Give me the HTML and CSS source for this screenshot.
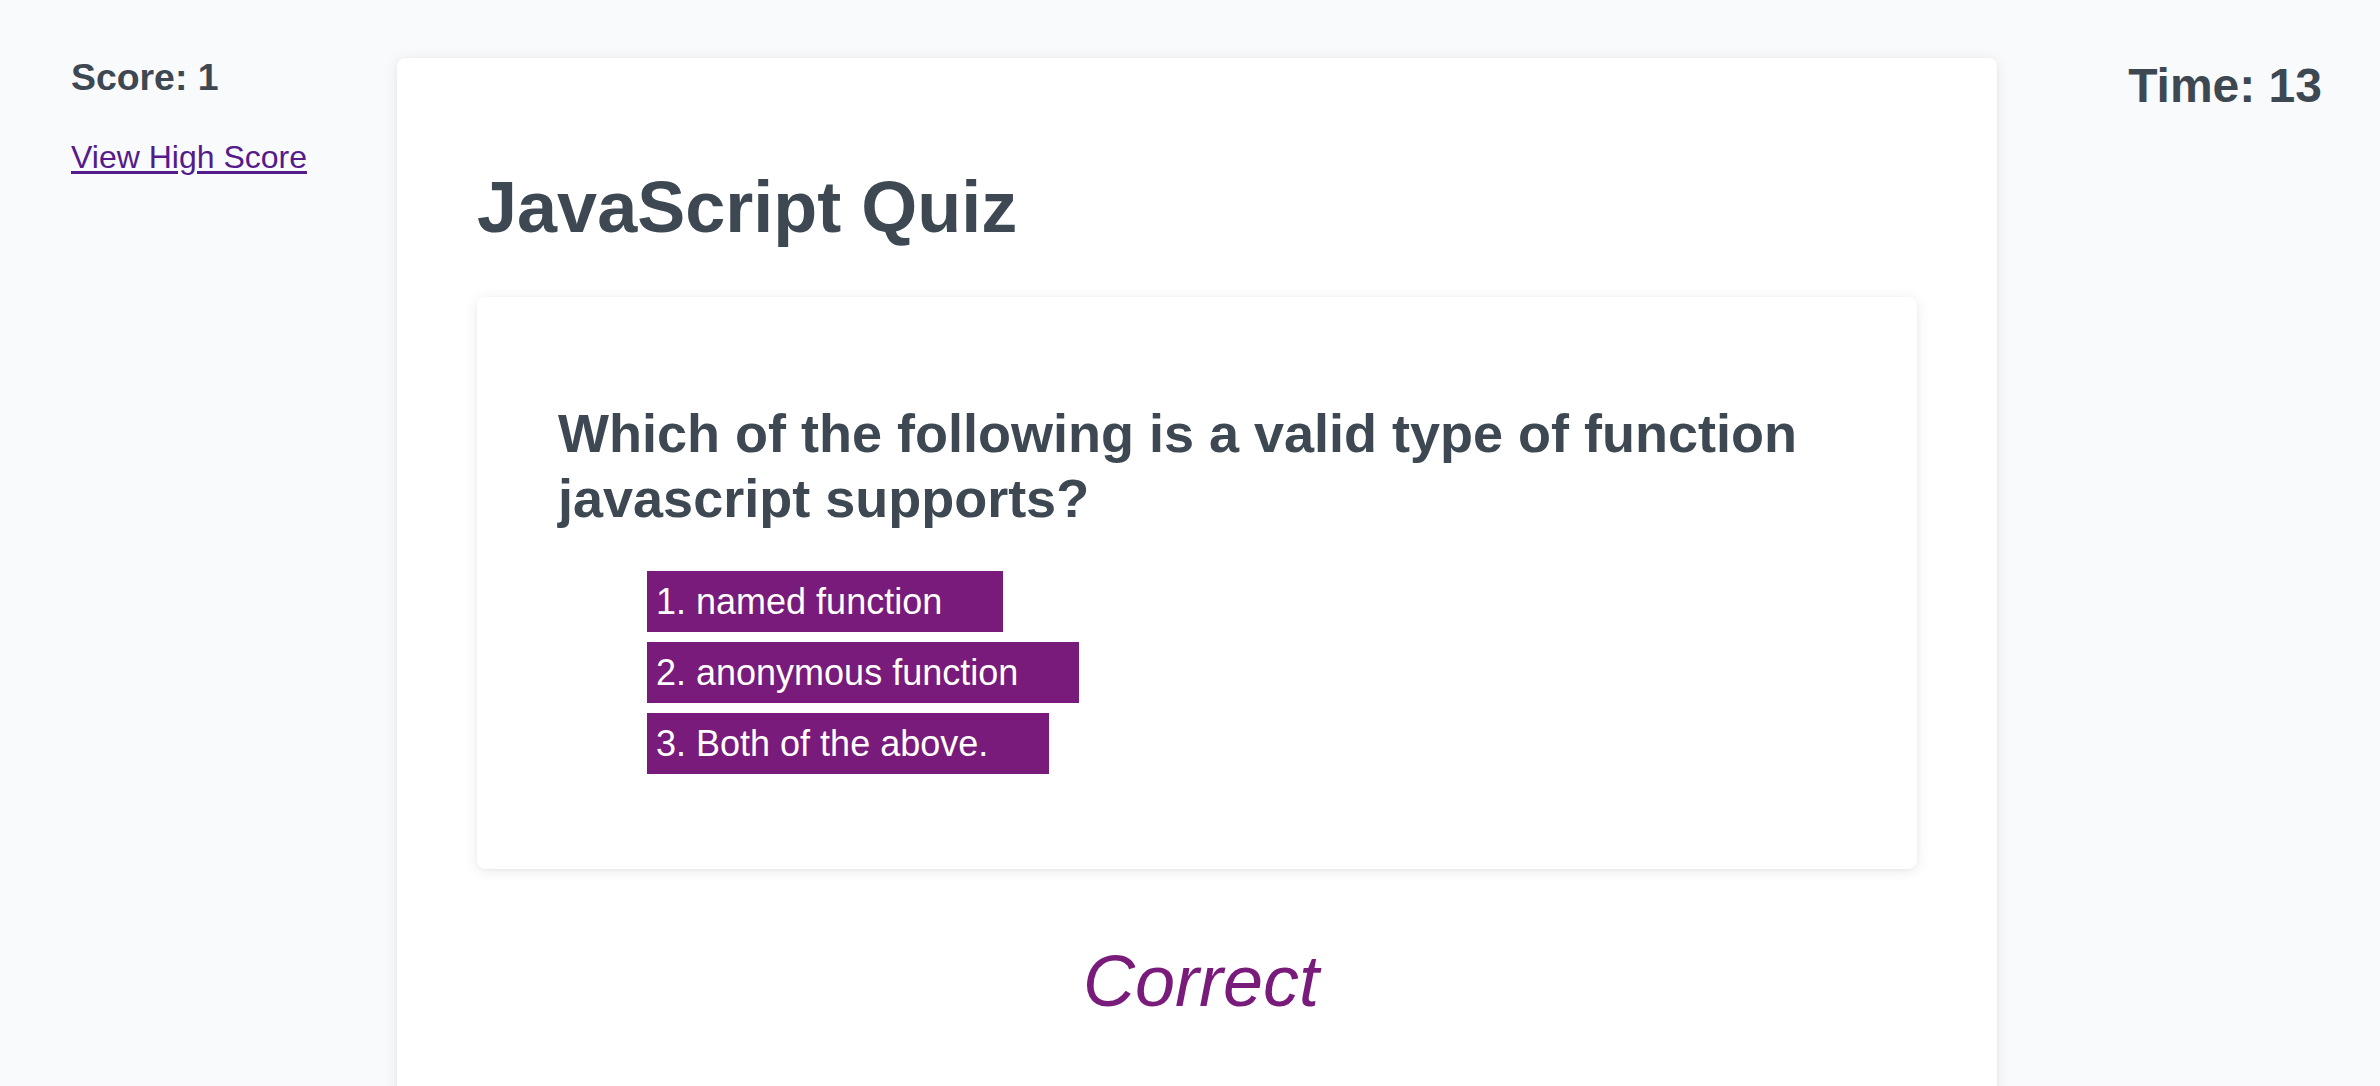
FILE: index.html
```html
<!DOCTYPE html>
<html lang="en">
<head>
<meta charset="utf-8">
<title>JavaScript Quiz</title>
<link rel="stylesheet" href="styles.css">
</head>
<body>
<div class="page">
  <aside class="side-left">
    <h3 class="score">Score: 1</h3>
    <a class="high-link" href="#">View High Score</a>
  </aside>
  <main class="card">
    <h1 class="title">JavaScript Quiz</h1>
    <section class="question-card">
      <h2 class="question">Which of the following is a valid type of function javascript supports?</h2>
      <div class="answers">
        <button class="answer">1. named function</button>
        <button class="answer">2. anonymous function</button>
        <button class="answer">3. Both of the above.</button>
      </div>
    </section>
    <p class="result">Correct</p>
  </main>
  <aside class="side-right">
    <h2 class="timer">Time: 13</h2>
  </aside>
</div>
</body>
</html>
```
FILE: styles.css
```css
* { box-sizing: border-box; }
html, body { margin: 0; padding: 0; }
body {
  background: #f8fafc;
  color: #3d4852;
  font-family: "Liberation Sans", Arial, Helvetica, sans-serif;
}
.page {
  display: grid;
  grid-template-columns: 397px 1600px 1fr;
  align-items: start;
  padding-top: 58px;
}
.side-left {
  padding-left: 71px;
  display: flex;
  flex-direction: column;
  align-items: flex-start;
}
.score {
  margin: -2.5px 0 0 0;
  font-size: 37.4px;
  line-height: 43px;
  font-weight: 700;
}
.high-link {
  margin-top: 40.5px;
  font-size: 32px;
  line-height: 37px;
  color: #551a8b;
  text-decoration: underline;
  text-underline-offset: 3px;
}
.card {
  background: #fff;
  border-radius: 8px;
  box-shadow: 0 2px 16px rgba(0, 0, 0, 0.08), 0 1px 4px rgba(0, 0, 0, 0.04);
  padding: 108px 80px 120px 80px;
}
.title {
  margin: 0;
  font-size: 72px;
  line-height: 82px;
  font-weight: 700;
}
.question-card {
  margin-top: 49px;
  background: #fff;
  border-radius: 8px;
  box-shadow: 0 2px 14px rgba(0, 0, 0, 0.09), 0 1px 3px rgba(0, 0, 0, 0.04);
  padding: 103.5px 80px 95px 81px;
}
.question {
  margin: 0;
  font-size: 54px;
  line-height: 65px;
  font-weight: 700;
}
.answers {
  margin-top: 40.5px;
  margin-left: 89px;
  display: flex;
  flex-direction: column;
  align-items: flex-start;
  gap: 10px;
}
.answer {
  border: 0;
  border-radius: 0;
  background: #781b7b;
  color: #fff;
  font-family: "Liberation Sans", Arial, Helvetica, sans-serif;
  font-size: 36px;
  line-height: 41px;
  padding: 10px 61px 10px 9px;
  height: 61px;
  cursor: pointer;
}
.result {
  margin: 71px 0 0 0;
  padding-left: 8px;
  text-align: center;
  font-size: 72px;
  line-height: 82px;
  font-style: italic;
  color: #781b7b;
}
.side-right {
  display: flex;
  justify-content: flex-end;
  padding-right: 58px;
}
.timer {
  margin: 0;
  font-size: 48px;
  line-height: 55px;
  font-weight: 700;
}
```
